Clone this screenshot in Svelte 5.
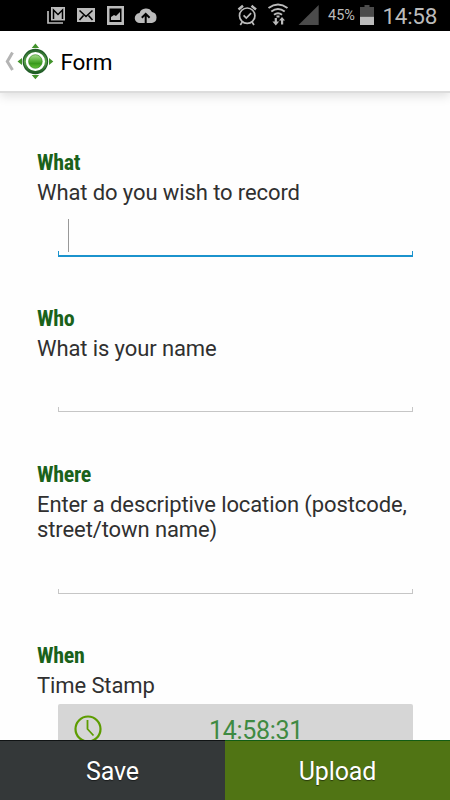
<script lang="ts">
  let what = '';
  let who = '';
  let where = '';
  let time = '14:58:31';
</script>

<div class="screen">
  <div class="status">
    <svg class="notifications" width="160" height="31" viewBox="0 0 160 31">
      <path d="M48 11v12h15" fill="none" stroke="#bbb" stroke-width="1.7" />
      <path d="M51 7h14v13.500H51z" fill="#bbb" />
      <path d="M53.500 19V10l4.500 4.500 4.500-4.500V19" fill="none" stroke="#000" stroke-width="1.5" />
      <path d="M77 8h18v14H77z" fill="#bbb" />
      <path d="M79.5 10.5l6.500 6 6.500-6M79.500 20l4-4.500M92.500 20l-4-4.500" fill="none" stroke="#000" stroke-width="1.6" />
      <path d="M107 6h17v19h-17z" fill="#bbb" />
      <path d="M109.500 8.500h12v13.500h-12z" fill="#000" />
      <path d="M111 20v-3l3-2 2 1 4-4v8z" fill="#bbb" />
      <path d="M140 23a5 5 0 0 1-.5-10 7 7 0 0 1 12.500-1 5.600 5.600 0 0 1 0 11z" fill="#bbb" />
      <path d="M145.700 23v-8M141.800 17.700l3.900-3.900 3.900 3.900" fill="none" stroke="#000" stroke-width="2" />
    </svg>
    <svg class="indicators" width="94" height="31" viewBox="230 0 94 31">
      <g fill="none" stroke="#bbb" stroke-width="1.7">
        <circle cx="247.200" cy="15.700" r="7.700" />
        <path d="M243.600 15.300l2.700 2.700 4.800-4.800M242.300 22l-2 3M252 22l2 3" />
        <path d="M238.500 9.500l4.500-3.700M256 9.500l-4.500-3.700" stroke-width="2.500" />
        <path d="M268.500 8q9.500-7 19 0M271.300 11.500q6.700-5 13.400 0M274 14.800q4-3 8 0" stroke-width="2" />
      </g>
      <path d="M276.500 15.500h3v2h-3zM274.700 18h2.200v3.500h2.300l-3.400 4-3.400-4h2.300zM281 24.500v-4h-2l3-3.500 3 3.500h-1.800v4z" fill="#bbb" />
      <path d="M318.700 5v20H298.500z" fill="#4b4b4b" />
    </svg>
    <span class="percent">45%</span>
    <svg class="battery" width="14" height="21" viewBox="0 0 14 21">
      <path d="M4.500 0h5v2H14v9H0V2h4.500z" fill="#4b4b4b" />
      <path d="M0 11.500h14V20H0z" fill="#bbb" />
    </svg>
    <span class="clock">14:58</span>
  </div>

  <header>
    <svg width="56" height="60" viewBox="0 31 56 60">
      <defs>
        <linearGradient id="ball" x1="0" y1="0" x2="0" y2="1">
          <stop offset="0" stop-color="#a9dc90" />
          <stop offset="0.4" stop-color="#62b743" />
          <stop offset="0.65" stop-color="#39991b" />
          <stop offset="1" stop-color="#67c33b" />
        </linearGradient>
        <linearGradient id="ring" x1="0" y1="0" x2="0" y2="1">
          <stop offset="0" stop-color="#29682c" />
          <stop offset="0.5" stop-color="#5ba44b" />
          <stop offset="1" stop-color="#205f24" />
        </linearGradient>
      </defs>
      <path d="M12.500 52.500L7.300 61.500l5.200 8.500" fill="none" stroke="#b4b4b4" stroke-width="3" />
      <path d="M31.700 48l3.700-4.500 3.700 4.500zM31.700 75h7.400l-3.700 4.300zM22 58v7l-4.500-3.500zM49 58v7l4.300-3.500z" fill="#42932b" />
      <circle cx="35.400" cy="61.500" r="11.500" fill="#fff" stroke="#225c29" stroke-width="2.600" />
      <circle cx="35.400" cy="61.500" r="10.600" fill="none" stroke="url(#ring)" stroke-width="2" />
      <circle cx="35.400" cy="61.500" r="6.800" fill="url(#ball)" stroke="#348b20" stroke-width="0.700" />
    </svg>
    <h1>Form</h1>
  </header>

  <main>
    <section>
      <h2>What</h2>
      <label for="what">What do you wish to record</label>
      <div class="field focused">
        <span class="caret"></span>
        <input id="what" bind:value={what} />
      </div>
    </section>
    <section>
      <h2>Who</h2>
      <label for="who">What is your name</label>
      <div class="field">
        <input id="who" bind:value={who} />
      </div>
    </section>
    <section>
      <h2>Where</h2>
      <label for="where">Enter a descriptive location (postcode, street/town name)</label>
      <div class="field">
        <input id="where" bind:value={where} />
      </div>
    </section>
    <section>
      <h2>When</h2>
      <label for="when">Time Stamp</label>
      <button id="when" class="time">
        <svg width="28" height="28" viewBox="0 0 28 28" fill="none" stroke="#5d9c00" stroke-width="2.200">
          <circle cx="14" cy="14" r="12.500" />
          <path d="M13.500 5v9l6 6.500" stroke-width="1.800" />
        </svg>
        <span>{time}</span>
      </button>
    </section>
  </main>

  <footer>
    <button class="save">Save</button>
    <button class="upload">Upload</button>
  </footer>
</div>

<style>
  :global(body) {
    margin: 0;
    background: #fefefe;
  }

  .screen {
    display: flex;
    flex-direction: column;
    width: 450px;
    height: 800px;
    overflow: hidden;
    font-family: Roboto, sans-serif;
    color: #303030;
    background: #fefefe;
  }

  .status {
    display: flex;
    align-items: center;
    height: 31px;
    flex-shrink: 0;
    background: #000;
    color: #bbb;
  }

  .indicators {
    margin-left: 70px;
  }

  .percent {
    width: 31px;
    margin-left: 4px;
    font-size: 14.500px;
    line-height: 32px;
  }

  .battery {
    margin-left: 1px;
  }

  .clock {
    margin-left: 8.5px;
    font-size: 22.500px;
    letter-spacing: -0.3px;
    line-height: 32px;
  }

  header {
    display: flex;
    align-items: center;
    height: 60px;
    flex-shrink: 0;
    background: #fff;
    border-bottom: 2px solid #dcdcdc;
    box-shadow: 0 3px 10px rgba(0, 0, 0, 0.13);
  }

  h1 {
    margin: 2px 0 0 4.5px;
    font-size: 22.500px;
    font-weight: 400;
    letter-spacing: -0.1px;
    color: #000;
  }

  main {
    flex: 1;
    min-height: 0;
    padding: 57px 37px 0;
    overflow: hidden;
  }

  section {
    margin-bottom: 49.6px;
  }

  h2 {
    height: 29px;
    margin: 0;
    font-family: 'Roboto Condensed', Roboto, sans-serif;
    font-size: 22px;
    font-stretch: 75%;
    font-weight: 700;
    letter-spacing: -0.3px;
    line-height: 26px;
    color: #1a621a;
  }

  label {
    display: block;
    padding-top: 1px;
    font-size: 22px;
    letter-spacing: -0.1px;
    line-height: 25.4px;
  }

  .field {
    display: flex;
    align-items: flex-end;
    box-sizing: border-box;
    width: 355px;
    height: 51px;
    margin-left: 21px;
    border-bottom: 1px solid #c6c6c6;
    background:
      linear-gradient(#c6c6c6, #c6c6c6) left bottom / 1px 4px no-repeat,
      linear-gradient(#c6c6c6, #c6c6c6) right bottom / 1px 4px no-repeat;
  }

  .focused {
    height: 52px;
    margin-bottom: -1px;
    border-bottom: 2px solid #1b93cd;
    background:
      linear-gradient(#1b93cd, #1b93cd) left bottom / 1px 4px no-repeat,
      linear-gradient(#1b93cd, #1b93cd) right bottom / 1px 4px no-repeat;
  }

  section:first-child {
    margin-bottom: 48.6px;
  }

  .focused {
    margin-bottom: 0;
  }

  .caret {
    width: 1px;
    height: 33px;
    margin: 0 0 3px 10px;
    background: #999;
  }

  input {
    flex: 1;
    min-width: 0;
    height: 36px;
    padding: 0 10px;
    border: none;
    outline: none;
    background: transparent;
    font: inherit;
    font-size: 22px;
  }

  .time {
    display: flex;
    align-items: center;
    width: 355px;
    height: 50px;
    margin: 5px 0 0 21px;
    padding: 0 3px 0 16px;
    border: none;
    border-radius: 2px;
    background: #d6d6d6;
    font-family: inherit;
    font-size: 25px;
    letter-spacing: -0.3px;
    color: #3f8a42;
  }

  .time span {
    flex: 1;
    padding-top: 3px;
    text-align: center;
  }

  footer {
    display: flex;
    height: 60px;
    flex-shrink: 0;
  }

  footer button {
    flex: 1;
    padding: 2px 0 0;
    border: none;
    font-family: inherit;
    font-size: 25px;
    letter-spacing: -0.15px;
    color: #fff;
    text-shadow: 0 1px 1px rgba(0, 0, 0, 0.5);
  }

  .save {
    background: #343839;
    border-top: 1px solid #101314;
  }

  .upload {
    background: #507414;
    border-top: 1px solid #115c14;
  }
</style>
